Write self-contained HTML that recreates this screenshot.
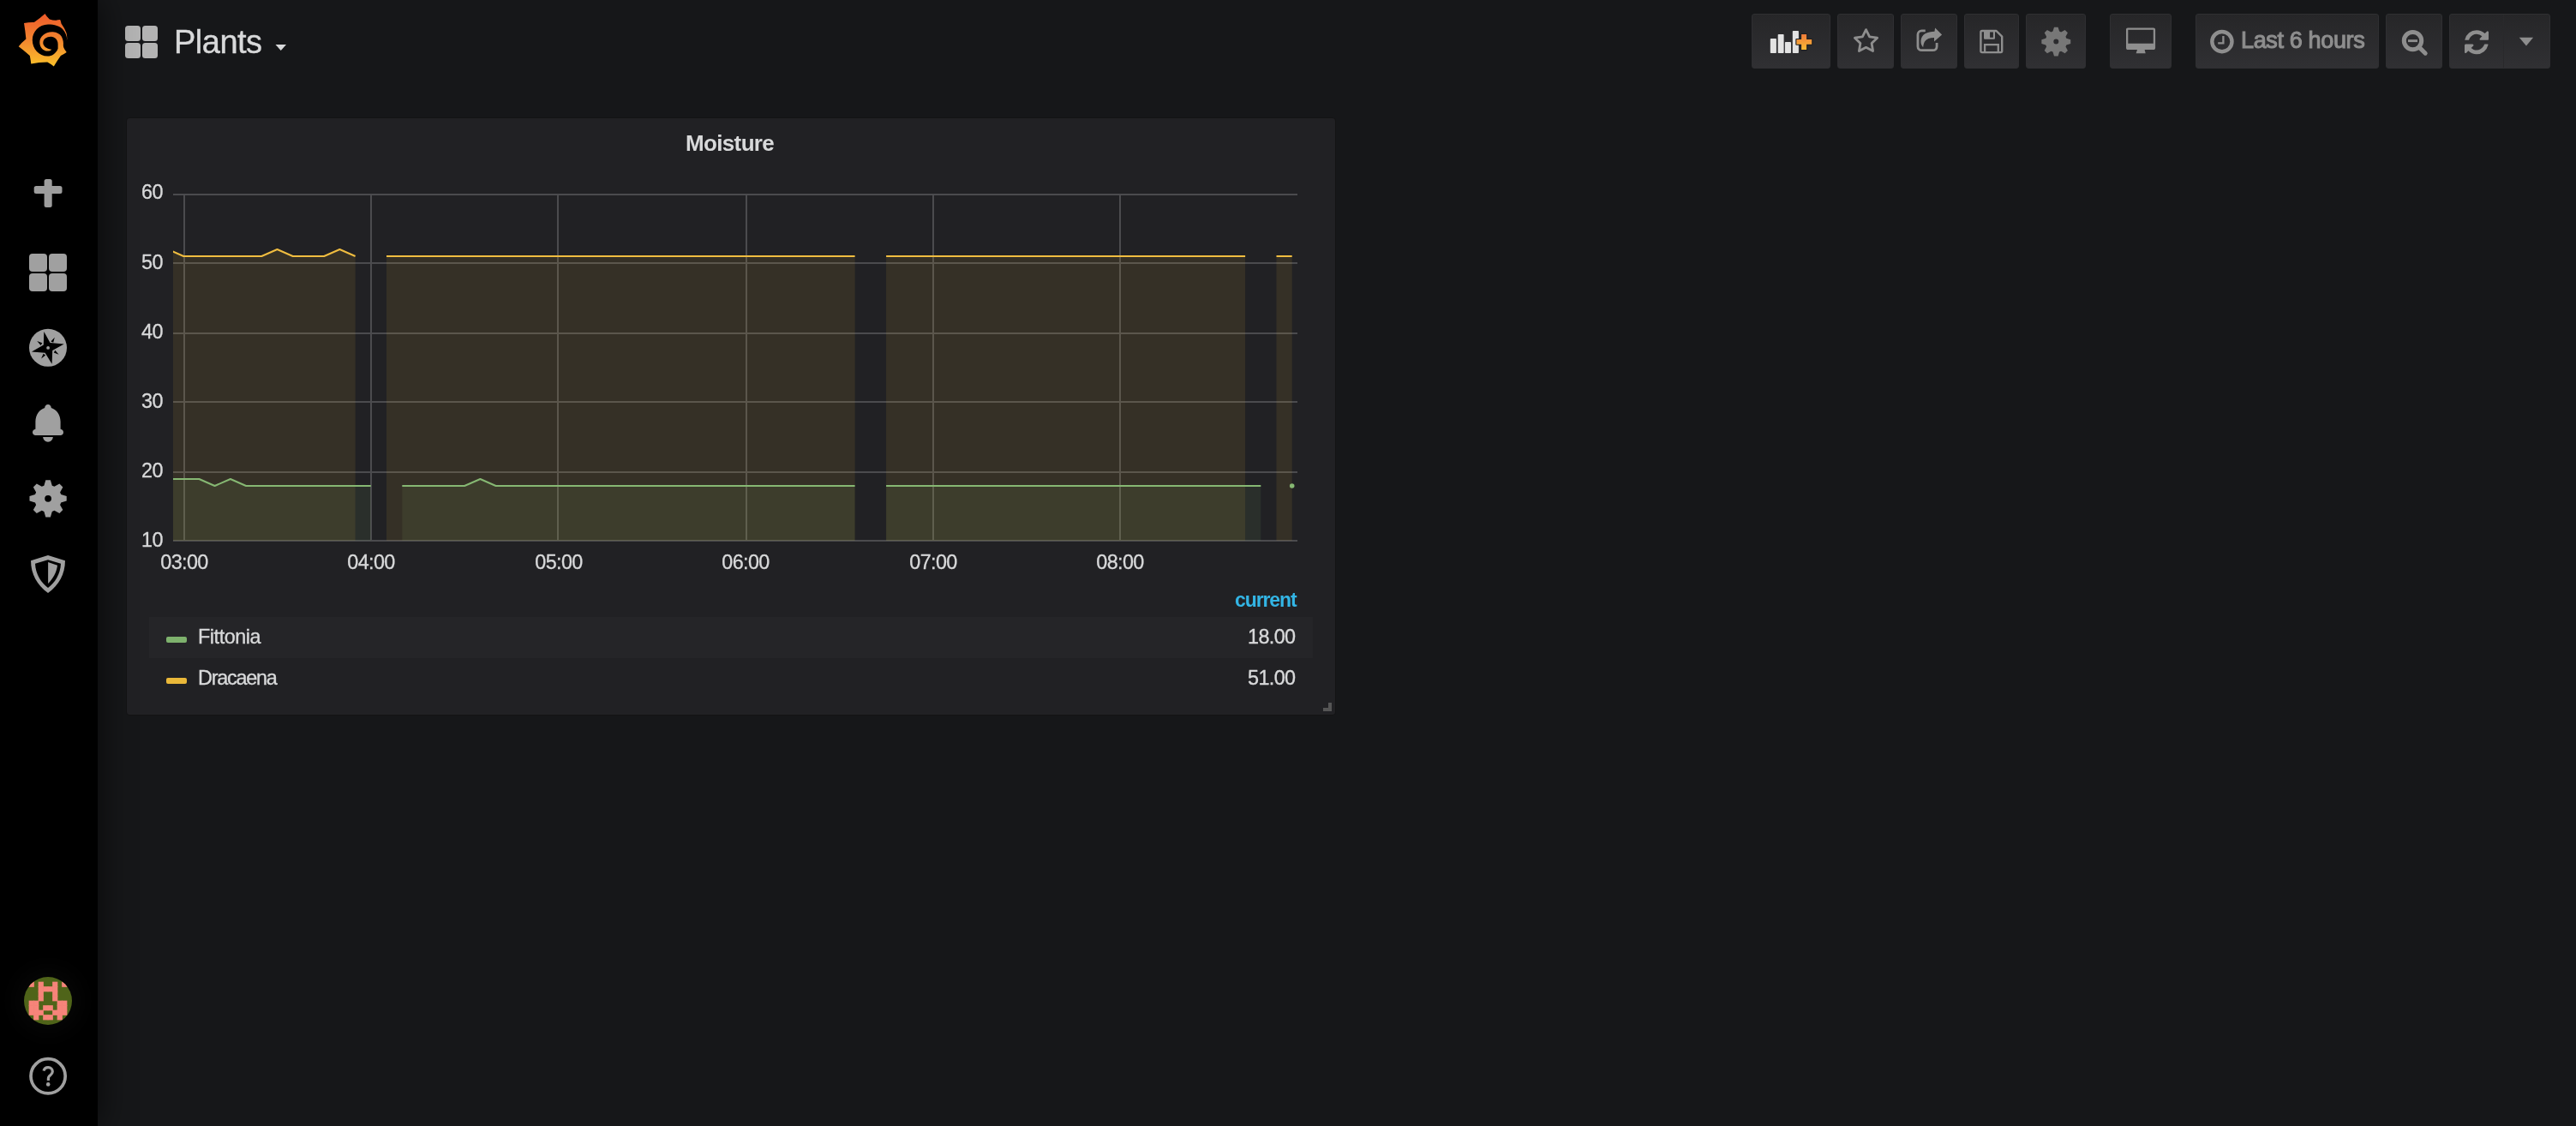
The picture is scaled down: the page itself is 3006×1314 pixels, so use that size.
<!DOCTYPE html>
<html><head><meta charset="utf-8">
<style>
html,body{margin:0;padding:0;}
body{width:3006px;height:1314px;background:#161719;position:relative;overflow:hidden;font-family:"Liberation Sans",sans-serif;color:#d8d9da;}
.a{position:absolute;white-space:nowrap;line-height:1;will-change:transform;}
#side{position:absolute;left:0;top:0;width:114px;height:1314px;background:#000;box-shadow:0 0 40px rgba(0,0,0,.7);z-index:2;}
#side svg{position:absolute;}
.btn{position:absolute;top:16px;height:64px;box-sizing:border-box;border:1px solid #2f2f32;border-radius:3px;background:linear-gradient(#262628,#303033);}
.btn svg{position:absolute;left:0;top:0;}
#panel{position:absolute;left:147px;top:137px;width:1410px;height:696px;background:#212124;border:1px solid #131314;border-radius:4px;}
#chart{position:absolute;left:0;top:0;}
.yl{will-change:transform;position:absolute;right:2816px;font-size:23.4px;letter-spacing:-0.5px;line-height:1;-webkit-text-stroke:0.3px #d8d9da;}
.xl{will-change:transform;position:absolute;top:644.5px;width:120px;text-align:center;font-size:23.4px;letter-spacing:-0.6px;line-height:1;-webkit-text-stroke:0.3px #d8d9da;}
</style></head>
<body>
<!-- ===== SIDEBAR ===== -->
<div id="side">
  <!-- grafana logo -->
  <svg style="left:0;top:0" width="114" height="100" viewBox="0 0 114 100">
    <defs><linearGradient id="lg" gradientUnits="userSpaceOnUse" x1="0" y1="16" x2="0" y2="78">
      <stop offset="0" stop-color="#ee5a2b"/><stop offset="0.5" stop-color="#f3862f"/><stop offset="1" stop-color="#fac22a"/></linearGradient></defs>
    <path fill="url(#lg)" d="M52.5 16 Q54.5 19.5 57.8 22.6 Q61.5 23.8 65.3 23.8 Q67.5 22.8 70.2 22.9 Q71.2 25 71.5 27.5 Q75.5 33 77.5 38.5 Q78.4 42 78.3 45.9 L73.3 47.5 L73.8 53 L74.2 55.7 Q75.8 58.2 77.7 61.1 Q74.5 63.5 70.9 64.9 Q66.5 71 62.8 77.6 Q59 74.5 55.3 72.6 Q45.5 72.8 36.3 74.5 Q35.7 69.5 34.8 64.9 Q28 59 21.7 54.3 Q25.5 49.5 30.4 45.6 Q29.5 36 28 26.9 Q34 25.8 39.8 26 Q46.5 21.5 52.5 16 Z"/>
    <path fill="#000" d="M78.3 45.8 C77.8 41.5 76 37.3 73.5 34.5 C70 30.5 63.5 28.6 56 28.6 C45.5 28.8 37.8 37 37.8 46.8 C37.8 57 45.5 65.6 55.5 65.6 C60.5 65.6 64.8 62.5 67.6 57.2 L73.8 53.3 L75.5 49 Z"/>
    <path fill="url(#lg)" d="M73.8 53.3 C74.2 51 74 46.5 71.9 42.8 C69.8 39.5 66.5 37.6 61.7 37.3 C52.5 36.9 46.3 42.8 46.3 49.5 C46.3 55.2 50.5 59.6 55.5 59.6 C57.6 59.6 59.3 58.9 60.3 57.7 C59.2 57.7 58 57.5 56.8 57 C53.2 55.8 50.3 53.3 50.3 50 C50.3 45.8 54.2 42.8 59.5 42.8 C64 42.8 67.6 46.5 67.6 51.4 L67.6 57.2 L66.5 60 L74.5 57 Z"/>
  </svg>
  <!-- plus -->
  <svg style="left:0;top:196px" width="114" height="60">
    <rect x="39.7" y="21" width="32.8" height="9.1" rx="2.5" fill="#9d9d9d"/>
    <rect x="51.6" y="12.9" width="9.1" height="33" rx="2.5" fill="#9d9d9d"/>
  </svg>
  <!-- dashboards -->
  <svg style="left:0;top:290px" width="114" height="56">
    <rect x="34" y="6" width="21" height="21" rx="4" fill="#a0a0a0"/>
    <rect x="57" y="6" width="21" height="21" rx="4" fill="#a0a0a0"/>
    <rect x="34" y="29" width="21" height="21" rx="4" fill="#a0a0a0"/>
    <rect x="57" y="29" width="21" height="21" rx="4" fill="#a0a0a0"/>
  </svg>
  <!-- explore compass -->
  <svg style="left:26px;top:376px" width="60" height="60">
    <circle cx="30" cy="29.8" r="22" fill="#a0a0a0"/>
    <path fill="#000" d="M25.3 10.9 L32.5 24 L48.7 25.6 L35.2 33 L34.6 48.7 L26.6 35.7 L10.9 34.4 L24.8 26.6 Z"/>
    <path fill="#000" d="M37.8 17.8 L36.2 23.8 L33.3 22.4 Z M42.6 37.8 L36.8 35.5 L38.3 32.8 Z M22.1 42.6 L24.6 36.7 L27.1 38.4 Z M17.3 22.1 L23.3 24.3 L21.5 27 Z"/>
    <circle cx="30.1" cy="29.9" r="1.9" fill="#a0a0a0"/>
  </svg>
  <!-- bell -->
  <svg style="left:26px;top:464px" width="60" height="60">
    <path fill="#a0a0a0" d="M30 8 C32.2 8 33.8 9.8 33.8 11.9 C40 13.8 44.6 20 44.6 28 L44.6 36.8 C46.6 37 48 38.6 48 40.4 C48 42.4 46.5 44 44.5 44 L15.5 44 C13.5 44 12 42.4 12 40.4 C12 38.6 13.4 37 15.4 36.8 L15.4 28 C15.4 20 20 13.8 26.2 11.9 C26.2 9.8 27.8 8 30 8 Z"/>
    <path fill="#a0a0a0" d="M24.2 46 L35.8 46 A5.8 5.8 0 0 1 24.2 46 Z"/>
  </svg>
  <!-- gear -->
  <svg style="left:26px;top:552px" width="60" height="60">
    <path fill="#a0a0a0" fill-rule="evenodd" d="M25.40 14.72 L27.30 8.18 L32.90 8.18 L34.80 14.72 L37.44 15.81 L43.41 12.53 L47.37 16.49 L44.09 22.46 L45.18 25.10 L51.72 27.00 L51.72 32.60 L45.18 34.50 L44.09 37.14 L47.37 43.11 L43.41 47.07 L37.44 43.79 L34.80 44.88 L32.90 51.42 L27.30 51.42 L25.40 44.88 L22.76 43.79 L16.79 47.07 L12.83 43.11 L16.11 37.14 L15.02 34.50 L8.48 32.60 L8.48 27.00 L15.02 25.10 L16.11 22.46 L12.83 16.49 L16.79 12.53 L22.76 15.81 Z M34 29.8 A3.9 3.9 0 1 0 26.200000000000003 29.8 A3.9 3.9 0 1 0 34 29.8 Z"/>
  </svg>
  <!-- shield -->
  <svg style="left:26px;top:640px" width="60" height="60">
    <path fill="#a0a0a0" d="M30 8 L50 14.2 C50 30 42.5 43 30 52 C17.5 43 10 30 10 14.2 Z"/>
    <path fill="#000" d="M30 13.3 L45 17.7 C44.5 30 38 40 30 46 C22 40 15.5 30 15 17.7 Z"/>
    <path fill="#a0a0a0" d="M30.1 16 L41 19.7 C40 28 36 35 30.1 41 Z"/>
  </svg>
  <!-- avatar -->
  <div style="position:absolute;left:28px;top:1140px;width:56px;height:56px;border-radius:50%;overflow:hidden;background:#4f6419;box-shadow:0 0 30px 8px rgba(255,255,255,.03)">
    <svg width="56" height="56" style="position:absolute;left:0;top:0">
      <g fill="#f7847a"><rect x="5.65" y="5.65" width="6.20" height="6.20"/><rect x="16.65" y="5.65" width="6.20" height="6.20"/><rect x="33.15" y="5.65" width="6.20" height="6.20"/><rect x="44.15" y="5.65" width="6.20" height="6.20"/><rect x="16.65" y="11.15" width="6.20" height="6.20"/><rect x="22.15" y="11.15" width="6.20" height="6.20"/><rect x="27.65" y="11.15" width="6.20" height="6.20"/><rect x="33.15" y="11.15" width="6.20" height="6.20"/><rect x="16.65" y="16.65" width="6.20" height="6.20"/><rect x="33.15" y="16.65" width="6.20" height="6.20"/><rect x="16.65" y="22.15" width="6.20" height="6.20"/><rect x="33.15" y="22.15" width="6.20" height="6.20"/><rect x="5.65" y="27.65" width="6.20" height="6.20"/><rect x="11.15" y="27.65" width="6.20" height="6.20"/><rect x="38.65" y="27.65" width="6.20" height="6.20"/><rect x="44.15" y="27.65" width="6.20" height="6.20"/><rect x="5.65" y="33.15" width="6.20" height="6.20"/><rect x="11.15" y="33.15" width="6.20" height="6.20"/><rect x="22.15" y="33.15" width="6.20" height="6.20"/><rect x="27.65" y="33.15" width="6.20" height="6.20"/><rect x="38.65" y="33.15" width="6.20" height="6.20"/><rect x="44.15" y="33.15" width="6.20" height="6.20"/><rect x="5.65" y="38.65" width="6.20" height="6.20"/><rect x="11.15" y="38.65" width="6.20" height="6.20"/><rect x="16.65" y="38.65" width="6.20" height="6.20"/><rect x="33.15" y="38.65" width="6.20" height="6.20"/><rect x="38.65" y="38.65" width="6.20" height="6.20"/><rect x="44.15" y="38.65" width="6.20" height="6.20"/><rect x="11.15" y="44.15" width="6.20" height="6.20"/><rect x="22.15" y="44.15" width="6.20" height="6.20"/><rect x="27.65" y="44.15" width="6.20" height="6.20"/><rect x="38.65" y="44.15" width="6.20" height="6.20"/></g>
    </svg>
  </div>
  <!-- help -->
  <svg style="left:26px;top:1226px" width="60" height="60">
    <circle cx="30.1" cy="29.8" r="20.1" fill="none" stroke="#a0a0a0" stroke-width="3.7"/>
    <path d="M25 23.6 C25.6 21.2 27.6 19.7 30.2 19.7 C33.3 19.7 35.3 22 35.3 24.6 C35.3 27.6 32.6 28.7 31.2 30.2 C30.6 30.9 30.4 31.6 30.4 32.6 L30.4 35" fill="none" stroke="#a0a0a0" stroke-width="3.2"/>
    <circle cx="30.2" cy="39.4" r="2.3" fill="#a0a0a0"/>
  </svg>
</div>

<!-- ===== HEADER ===== -->
<svg class="a" style="left:146px;top:30px" width="38" height="38">
  <rect x="0" y="0" width="18" height="18" rx="3.5" fill="#b3b3b3"/>
  <rect x="20" y="0" width="18" height="18" rx="3.5" fill="#b3b3b3"/>
  <rect x="0" y="20" width="18" height="18" rx="3.5" fill="#b3b3b3"/>
  <rect x="20" y="20" width="18" height="18" rx="3.5" fill="#b3b3b3"/>
</svg>
<div class="a" style="left:203px;top:30px;font-size:38px;letter-spacing:-0.5px;color:#d8d9da;-webkit-text-stroke:0.4px #d8d9da">Plants</div>
<svg class="a" style="left:321px;top:52px" width="14" height="8"><path d="M0.5 0 L13 0 L6.75 7 Z" fill="#d8d9da"/></svg>

<!-- add panel -->
<div class="btn" style="left:2044px;width:92px">
  <svg width="92" height="64" viewBox="0 0 92 64" style="left:-1px;top:-1px">
    <defs><linearGradient id="og" x1="0" y1="0" x2="0" y2="1"><stop offset="0" stop-color="#ee7b3a"/><stop offset="1" stop-color="#fbbb35"/></linearGradient></defs>
    <rect x="21.8" y="28.9" width="7.1" height="17.1" rx="0.8" fill="#e3e3e3"/>
    <rect x="30.7" y="24" width="6.9" height="22" rx="0.8" fill="#e3e3e3"/>
    <rect x="38.9" y="32.9" width="7.1" height="13.1" rx="0.8" fill="#e3e3e3"/>
    <rect x="47.8" y="19.9" width="7.1" height="26.1" rx="0.8" fill="#e3e3e3"/>
    <path d="M58.1 24 L64.1 24 L64.1 30 L70.2 30 L70.2 35.7 L64.1 35.7 L64.1 42.1 L58.1 42.1 L58.1 35.7 L52.4 35.7 L52.4 30 L58.1 30 Z" fill="url(#og)" stroke="#1d1d1f" stroke-width="2.2" stroke-linejoin="round" paint-order="stroke"/>
  </svg>
</div>
<!-- star -->
<div class="btn" style="left:2144px;width:66px">
  <svg width="66" height="64" style="left:-1px;top:-1px">
    <path d="M33.5 18.6 L37.6 26.9 L46.6 28.2 L40.1 34.6 L41.6 43.6 L33.5 39.3 L25.4 43.6 L26.9 34.6 L20.4 28.2 L29.4 26.9 Z" fill="none" stroke="#8e8e8e" stroke-width="2.8" stroke-linejoin="round"/>
  </svg>
</div>
<!-- share -->
<div class="btn" style="left:2218px;width:66px">
  <svg width="66" height="64" style="left:-1px;top:-1px">
    <path d="M28.75 19.9 L24.5 19.9 C21.9 19.9 19.95 21.8 19.95 24.4 L19.95 38.2 C19.95 40.8 21.9 42.7 24.5 42.7 L37.6 42.7 C40.2 42.7 42.1 40.8 42.1 38.2 L42.1 34.1" fill="none" stroke="#8e8e8e" stroke-width="2.8"/>
    <path d="M40.1 16.5 L48.1 24.4 L39 32.4 L39 28.1 C34 28.2 30 29.5 28 32.5 C27 34.3 26.4 36.5 26.2 39.2 C24.2 37 23.3 34.5 23.5 31.5 C23.8 28 25.5 25 28.5 23.2 C31.5 21.5 35.5 20.8 39.5 20.7 Z" fill="#8e8e8e"/>
  </svg>
</div>
<!-- save -->
<div class="btn" style="left:2292px;width:64px">
  <svg width="64" height="64" style="left:-1px;top:1px">
    <path d="M21 18 L37.5 18 L44.2 24.7 L44.2 41.5 Q44.2 43.1 42.6 43.1 L21 43.1 Q19.4 43.1 19.4 41.5 L19.4 19.6 Q19.4 18 21 18 Z" fill="none" stroke="#8e8e8e" stroke-width="2.4" stroke-linejoin="round"/>
    <path d="M23 18 L36 18 L36 26.5 C36 27.3 35.4 27.8 34.6 27.8 L24.4 27.8 C23.6 27.8 23 27.3 23 26.5 Z M30.1 19.3 L30.1 25.8 L33.9 25.8 L33.9 19.3 Z" fill="#8e8e8e" fill-rule="evenodd"/>
    <path d="M24.1 43 L24.1 34.1 L39.8 34.1 L39.8 43" fill="none" stroke="#8e8e8e" stroke-width="2.3"/>
  </svg>
</div>
<!-- settings gear -->
<div class="btn" style="left:2364px;width:70px">
  <svg width="70" height="64" style="left:-1px;top:-1px">
    <path fill="#777" fill-rule="evenodd" d="M31.50 20.59 L33.00 15.66 L37.60 15.66 L39.10 20.59 L41.11 21.42 L45.66 18.99 L48.91 22.24 L46.48 26.79 L47.31 28.80 L52.24 30.30 L52.24 34.90 L47.31 36.40 L46.48 38.41 L48.91 42.96 L45.66 46.21 L41.11 43.78 L39.10 44.61 L37.60 49.54 L33.00 49.54 L31.50 44.61 L29.49 43.78 L24.94 46.21 L21.69 42.96 L24.12 38.41 L23.29 36.40 L18.36 34.90 L18.36 30.30 L23.29 28.80 L24.12 26.79 L21.69 22.24 L24.94 18.99 L29.49 21.42 Z M38.3 32.6 A3 3 0 1 0 32.3 32.6 A3 3 0 1 0 38.3 32.6 Z"/>
  </svg>
</div>
<!-- tv -->
<div class="btn" style="left:2462px;width:72px">
  <svg width="72" height="64" style="left:-1px;top:5px">
    <path d="M21 10.5 L51 10.5 C52.2 10.5 53.1 11.4 53.1 12.6 L53.1 33.9 C53.1 35.1 52.2 36 51 36 L21 36 C19.8 36 19 35.1 19 33.9 L19 12.6 C19 11.4 19.8 10.5 21 10.5 Z M21.3 12.8 L21.3 28.7 L50.8 28.7 L50.8 12.8 Z" fill="#8e8e8e" fill-rule="evenodd"/>
    <path d="M32 36 L40.6 36 L41.7 40.3 L30.6 40.3 Z" fill="#8e8e8e"/>
  </svg>
</div>
<!-- time picker -->
<div class="btn" style="left:2562px;width:214px">
  <svg width="60" height="64" style="left:-1px;top:-1px">
    <circle cx="30.9" cy="32.6" r="11.6" fill="none" stroke="#8e8e8e" stroke-width="4.4"/>
    <path d="M32.4 25.9 L32.4 34.3 L26.2 34.3" fill="none" stroke="#8e8e8e" stroke-width="2.3"/>
  </svg>
  <div class="a" style="left:52px;top:16.5px;font-size:27px;letter-spacing:-0.35px;color:#8e8e8e;-webkit-text-stroke:1.1px #8e8e8e">Last 6 hours</div>
</div>
<!-- zoom out -->
<div class="btn" style="left:2784px;width:66px">
  <svg width="66" height="64" style="left:-1px;top:-1px">
    <circle cx="31.5" cy="31.6" r="10.2" fill="none" stroke="#8e8e8e" stroke-width="5"/>
    <path d="M39.5 39.6 L46.2 46.2" stroke="#8e8e8e" stroke-width="5" stroke-linecap="round"/>
    <rect x="26" y="30.2" width="11" height="2.9" fill="#8e8e8e"/>
  </svg>
</div>
<!-- refresh -->
<div class="btn" style="left:2858px;width:118px">
  <div style="position:absolute;left:62px;top:0;width:1px;height:62px;background:#29292b"></div>
  <svg width="64" height="64" style="left:-1px;top:-1px" viewBox="0 0 64 64">
    <g transform="translate(18 19.2) scale(0.01823)">
    <path fill="#8e8e8e" d="M1511 928q0 5-1 7-64 268-268 434.5T764 1536q-146 0-282.5-55T238 1324l-129 129q-19 19-45 19t-45-19-19-45V960q0-26 19-45t45-19h448q26 0 45 19t19 45-19 45l-137 137q71 66 161 102t187 36q134 0 250-65t186-179q11-17 53-117 8-23 30-23h192q13 0 22.5 9.5t9.5 22.5zm25-800v448q0 26-19 45t-45 19h-448q-26 0-45-19t-19-45 19-45l138-138Q969 256 768 256q-134 0-250 65T332 500q-11 17-53 117-8 23-30 23H50q-13 0-22.5-9.5T18 608v-7q65-268 270-434.5T768 0q146 0 284 55.5T1297 212l130-129q19-19 45-19t45 19 19 45z"/>
    </g>
  </svg>
  <svg width="118" height="64" style="left:-1px;top:-1px">
    <path d="M81.8 27.7 L98.1 27.7 L89.95 37.5 Z" fill="#8e8e8e"/>
  </svg>
</div>

<!-- ===== PANEL ===== -->
<div id="panel"></div>
<div class="a" style="left:800px;top:154px;font-size:26px;font-weight:bold;letter-spacing:-0.65px;color:#d8d9da">Moisture</div>

<svg id="chart" width="3006" height="1314" viewBox="0 0 3006 1314">
  <defs><clipPath id="pc"><rect x="202" y="180" width="1312" height="452"/></clipPath></defs>
  <g stroke="#4b4b4e" stroke-width="2">
    <path d="M202 227 H1514 M202 307 H1514 M202 389 H1514 M202 469 H1514 M202 551 H1514 M202 631 H1514"/>
    <path d="M215 226 V632 M433 226 V632 M651 226 V632 M871 226 V632 M1089 226 V632 M1307 226 V632"/>
  </g>
  <g clip-path="url(#pc)">
    <g fill="#7eb26d" fill-opacity="0.1">
      <path d="M196.0 631 L196.0 559 L232.4 559 L250.6 567 L268.9 559 L287.1 567 L432.8 567 L432.8 631 Z"/>
      <path d="M469.3 631 L469.3 567 L542.1 567 L560.4 559 L578.6 567 L997.6 567 L997.6 631 Z"/>
      <path d="M1034.1 631 L1034.1 567 L1471.3 567 L1471.3 631 Z"/>
    </g>
    <g fill="#eab839" fill-opacity="0.1">
      <path d="M196.0 631 L196.0 291 L214.2 299 L305.3 299 L323.5 291 L341.7 299 L378.2 299 L396.4 291 L414.6 299 L414.6 631 Z"/>
      <path d="M451.0 631 L451.0 299 L997.6 299 L997.6 631 Z"/>
      <path d="M1034.1 631 L1034.1 299 L1453.1 299 L1453.1 631 Z"/>
      <path d="M1489.5 631 L1489.5 299 L1507.7 299 L1507.7 631 Z"/>
    </g>
    <g fill="none" stroke="#86b873" stroke-width="2" stroke-linejoin="round">
      <path d="M196.0 559 L232.4 559 L250.6 567 L268.9 559 L287.1 567 L432.8 567"/>
      <path d="M469.3 567 L542.1 567 L560.4 559 L578.6 567 L997.6 567"/>
      <path d="M1034.1 567 L1471.3 567"/>
    </g>
    <circle cx="1507.7" cy="567" r="2.8" fill="#86b873"/>
    <g fill="none" stroke="#f0bd40" stroke-width="2" stroke-linejoin="round">
      <path d="M196.0 291 L214.2 299 L305.3 299 L323.5 291 L341.7 299 L378.2 299 L396.4 291 L414.6 299"/>
      <path d="M451.0 299 L997.6 299"/>
      <path d="M1034.1 299 L1453.1 299"/>
      <path d="M1489.5 299 L1507.7 299"/>
    </g>
  </g>
</svg>
<div class="yl" style="top:213px">60</div>
<div class="yl" style="top:295px">50</div>
<div class="yl" style="top:376px">40</div>
<div class="yl" style="top:457px">30</div>
<div class="yl" style="top:538px">20</div>
<div class="yl" style="top:619px">10</div>
<div class="xl" style="left:155px">03:00</div>
<div class="xl" style="left:373px">04:00</div>
<div class="xl" style="left:592px">05:00</div>
<div class="xl" style="left:810px">06:00</div>
<div class="xl" style="left:1029px">07:00</div>
<div class="xl" style="left:1247px">08:00</div>

<!-- legend -->
<div class="a" style="left:1441px;top:689px;font-size:23px;font-weight:bold;letter-spacing:-1.1px;color:#33b5e5">current</div>
<div style="position:absolute;left:174px;top:720px;width:1358px;height:48px;background:#252528"></div>
<div style="position:absolute;left:194px;top:743px;width:24px;height:6.5px;border-radius:2px;background:#7eb26d"></div>
<div style="position:absolute;left:194px;top:791px;width:24px;height:6.5px;border-radius:2px;background:#eab839"></div>
<div class="a" style="left:231px;top:732px;font-size:23.4px;letter-spacing:-0.45px;-webkit-text-stroke:0.35px #d8d9da">Fittonia</div>
<div class="a" style="left:231px;top:780px;font-size:23.4px;letter-spacing:-1.25px;-webkit-text-stroke:0.35px #d8d9da">Dracaena</div>
<div class="a" style="left:1456px;top:732px;font-size:23.4px;letter-spacing:-0.6px;-webkit-text-stroke:0.35px #d8d9da">18.00</div>
<div class="a" style="left:1456px;top:780px;font-size:23.4px;letter-spacing:-0.6px;-webkit-text-stroke:0.35px #d8d9da">51.00</div>
<!-- resize handle -->
<svg class="a" style="left:1540px;top:816px" width="18" height="18"><path d="M10 4 H14 V14 H4 V10 H10 Z" fill="#555"/></svg>


</body></html>
